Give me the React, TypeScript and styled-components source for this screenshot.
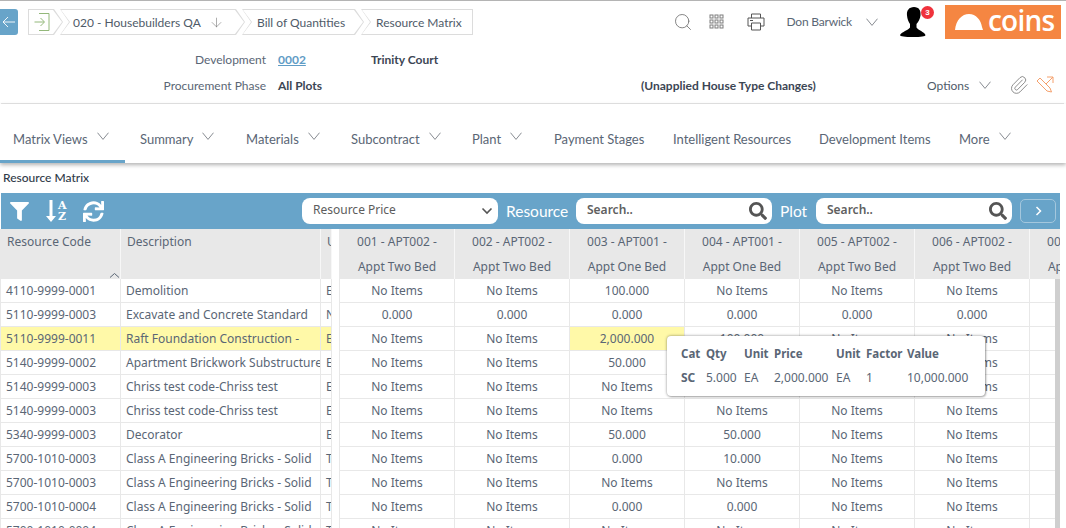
import { ArrowDown, Search, Paperclip } from "lucide-react";
import { FaFilter, FaSearch, FaSync } from "react-icons/fa";
import styled, { createGlobalStyle } from "styled-components";

const GlobalStyle = createGlobalStyle`
  html, body {
    margin: 0;
    padding: 0;
    height: 100%;
    background: #fff;
    overflow: hidden;
  }
  #root {
    height: 100%;
  }
`;

const Page = styled.div`
  width: 1066px;
  height: 528px;
  overflow: hidden;
  border-top: 1px solid #b4b4b4;
  box-sizing: border-box;
  font-family: Lato, "Liberation Sans", sans-serif;
  color: #5a6675;
`;

const TopBar = styled.div`
  display: flex;
  align-items: flex-start;
  height: 45px;
  padding-top: 8px;
  box-sizing: border-box;
`;

const BackButton = styled.div`
  width: 18px;
  height: 26px;
  background: #68a4c9;
  border-radius: 0 3px 3px 0;
  color: #fff;
  display: flex;
  align-items: center;
  justify-content: center;
  margin-right: 10px;
`;

const Crumb = styled.div<{ $width: number; $first?: boolean; $last?: boolean; $pad?: number }>`
  position: relative;
  width: ${(p) => p.$width}px;
  height: 26px;
  margin-left: ${(p) => (p.$first ? 0 : -3)}px;
  padding-left: ${(p) => p.$pad ?? 15}px;
  box-sizing: border-box;
  display: flex;
  align-items: center;
  gap: 8px;
  font-size: 12px;
  color: #4f5b69;
  background: #dcdcdc;
  clip-path: polygon(
    0 0,
    ${(p) => (p.$last ? "100% 0, 100% 100%" : "calc(100% - 9px) 0, 100% 50%, calc(100% - 9px) 100%")},
    0 100%,
    ${(p) => (p.$first ? "0 50%" : "9px 50%")}
  );

  &::before {
    content: "";
    position: absolute;
    inset: 0;
    background: #fff;
    clip-path: polygon(
      1px 1px,
      ${(p) =>
        p.$last
          ? "calc(100% - 1px) 1px, calc(100% - 1px) calc(100% - 1px)"
          : "calc(100% - 10px) 1px, calc(100% - 1px) 50%, calc(100% - 10px) calc(100% - 1px)"},
      1px calc(100% - 1px),
      ${(p) => (p.$first ? "1px 50%" : "10px 50%")}
    );
  }

  > * {
    position: relative;
  }
`;

const CrumbText = styled.span`
  white-space: nowrap;
`;

const TopActions = styled.div`
  margin-left: auto;
  display: flex;
  align-items: flex-start;
`;

const ActionIcon = styled.div<{ $gap: number; $top?: number }>`
  display: flex;
  margin-top: ${(p) => p.$top ?? 4}px;
  margin-right: ${(p) => p.$gap}px;
  color: #7d7d7d;
`;

const UserName = styled.span`
  font-size: 12px;
  letter-spacing: -0.2px;
  line-height: 26px;
  color: #5a6675;
  margin-right: 14px;
  white-space: nowrap;
`;

const Avatar = styled.div`
  position: relative;
  width: 26px;
  height: 30px;
  margin: -2px 19px 0 22px;
`;

const Badge = styled.span`
  position: absolute;
  top: -1px;
  left: 21px;
  width: 13px;
  height: 13px;
  border-radius: 50%;
  background: #f0323c;
  color: #fff;
  font: bold 8px/13px "Liberation Sans", sans-serif;
  text-align: center;
`;

const Logo = styled.div`
  width: 116px;
  height: 34px;
  margin-top: -4px;
  margin-right: 5px;
  background: #f58642;
  display: flex;
  align-items: center;
  padding-left: 9px;
  box-sizing: border-box;
  gap: 4px;
  color: #fff;
`;

const LogoWord = styled.span`
  font: 600 28px/34px "Open Sans", sans-serif;
  letter-spacing: -0.8px;
  margin-top: -4px;
`;

const InfoBlock = styled.div`
  margin: 0 2px 0 1px;
  height: 58px;
  border-bottom: 1px solid #e6e6e6;
  box-sizing: border-box;
`;

const InfoRow = styled.div`
  display: flex;
  align-items: center;
  height: 26px;
  font-size: 12px;
`;

const InfoLabel = styled.span`
  width: 265px;
  text-align: right;
  color: #5a6675;
  flex: none;
`;

const InfoLink = styled.a`
  width: 93px;
  margin-left: 12px;
  color: #5f9cc5;
  font-weight: 700;
  text-decoration: underline;
  flex: none;
`;

const InfoValue = styled.span<{ $width?: number }>`
  width: ${(p) => (p.$width ? `${p.$width}px` : "auto")};
  color: #3c4654;
  font-weight: 700;
  flex: none;
  white-space: nowrap;
`;

const PlotsValue = styled(InfoValue)`
  margin-left: 12px;
`;

const OptionsGroup = styled.div`
  display: flex;
  align-items: center;
  color: #4f5b69;
  margin-left: 111px;
`;

const OptionsText = styled.span`
  margin-right: 10px;
`;

const ClipIcon = styled.span`
  display: flex;
  margin: 0 7px 0 18px;
`;

const TabsBar = styled.div`
  display: flex;
  height: 59px;
  box-sizing: border-box;
  box-shadow: 0 2px 4px rgba(0, 0, 0, 0.3);
  align-items: stretch;
  background: #fff;
`;

const Tab = styled.div<{ $active?: boolean; $width: number }>`
  width: ${(p) => p.$width}px;
  flex: none;
  box-sizing: border-box;
  padding: 26px 0 0 ${(p) => (p.$active ? 13 : 15)}px;
  display: flex;
  gap: 9px;
  align-items: flex-start;
  font-size: 13px;
  line-height: 18px;
  color: #5a6675;
  border-bottom: 3px solid ${(p) => (p.$active ? "#68a4c9" : "transparent")};
  white-space: nowrap;
`;

const TabChevron = styled.span`
  display: flex;
  margin-top: 2px;
`;

const SectionTitle = styled.div`
  margin: 6px 0 0 3px;
  font-size: 12px;
  line-height: 18px;
  font-weight: 500;
  color: #2f3a48;
`;

const Toolbar = styled.div`
  margin: 6px 6px 0 1px;
  height: 36px;
  background: #68a4c9;
  display: flex;
  align-items: center;
  color: #fff;
  box-sizing: border-box;
`;

const ToolIcons = styled.div`
  display: flex;
  align-items: center;
  width: 301px;
  padding-left: 9px;
  box-sizing: border-box;
`;

const SortIcon = styled.div`
  display: flex;
  align-items: center;
  gap: 2px;
  margin: 0 16px 0 17px;
`;

const SortLetters = styled.div`
  display: flex;
  flex-direction: column;
  font: bold 11px/11px "DejaVu Serif", serif;
`;

const Field = styled.div`
  width: 196px;
  height: 26px;
  background: #fff;
  border-radius: 8px;
  display: flex;
  align-items: center;
  justify-content: space-between;
  padding: 0 5px 0 11px;
  box-sizing: border-box;
  font-family: "Noto Sans", sans-serif;
  color: #5c5c5c;
  flex: none;
`;

const SelectText = styled.span`
  font-size: 12px;
  margin-top: -3px;
`;

const SearchText = styled.span`
  font-size: 12px;
  font-weight: 600;
  color: #606060;
  margin-top: -3px;
`;

const ToolLabel = styled.span<{ $width: number }>`
  font-size: 15.5px;
  width: ${(p) => p.$width}px;
  margin: 0 8px;
  white-space: nowrap;
  flex: none;
`;

const NextButton = styled.div`
  width: 36px;
  height: 24px;
  margin-left: 8px;
  border: 1px solid #a4c7dd;
  border-radius: 5px;
  box-sizing: border-box;
  display: flex;
  align-items: center;
  justify-content: center;
`;

const GridArea = styled.div`
  display: flex;
  margin-right: 6px;
`;

const LeftPane = styled.div`
  width: 332px;
  flex: none;
  overflow: hidden;
  border-left: 1px solid #e8e8e8;
  box-sizing: border-box;
`;

const RightPane = styled.div`
  position: relative;
  margin-left: 7px;
  border-left: 1px solid #e8e8e8;
  flex: 1;
  overflow: hidden;
`;

const HeadRow = styled.div`
  display: flex;
  height: 50px;
  background: #e8e8e8;
`;

const HeadCell = styled.div<{ $width: number }>`
  position: relative;
  width: ${(p) => p.$width}px;
  flex: none;
  box-sizing: border-box;
  border-right: 1px solid #f7f7f7;
  padding: 4px 0 0 6px;
  font: 12px/18px "Noto Sans", sans-serif;
  white-space: nowrap;
  overflow: hidden;
`;

const SortCaret = styled.span`
  position: absolute;
  right: 0;
  bottom: 0;
  display: flex;
  color: #5a6675;
`;

const PlotHead = styled.div`
  width: 115px;
  flex: none;
  box-sizing: border-box;
  border-right: 1px solid #f7f7f7;
  font: 12px/25px "Noto Sans", sans-serif;
  text-align: center;
  white-space: nowrap;
`;

const Row = styled.div`
  display: flex;
  height: 24px;
`;

const Cell = styled.div<{ $width: number; $hit?: boolean; $center?: boolean }>`
  width: ${(p) => p.$width}px;
  flex: none;
  box-sizing: border-box;
  padding-left: ${(p) => (p.$center ? 0 : 5)}px;
  border-right: 1px solid #e8e8e8;
  border-bottom: 1px solid #e8e8e8;
  background: ${(p) => (p.$hit ? "#fff9a8" : "#fff")};
  font: 12px/23px "Noto Sans", sans-serif;
  text-align: ${(p) => (p.$center ? "center" : "left")};
  white-space: nowrap;
  overflow: hidden;
`;

const Scrollbar = styled.div`
  position: absolute;
  top: 50px;
  right: 0;
  bottom: 0;
  width: 5px;
  background: #cfcfcf;
`;

const Tooltip = styled.div`
  position: absolute;
  left: 327px;
  top: 107px;
  width: 318px;
  height: 60px;
  padding: 6px 0 0 14px;
  box-sizing: border-box;
  background: #fff;
  border-radius: 4px;
  box-shadow: 0 0 3px rgba(0, 0, 0, 0.45), 1px 1px 2px rgba(0, 0, 0, 0.2);
  display: grid;
  grid-template-columns: 25px 38px 30px 62px 30px 41px 1fr;
  grid-auto-rows: 24px;
  font: 12px/24px "Noto Sans", sans-serif;
`;

const TipHead = styled.span`
  font-weight: 700;
  font-size: 11.5px;
  color: #5a6675;
  white-space: nowrap;
`;

const TipCell = styled.span<{ $bold?: boolean }>`
  font-weight: ${(p) => (p.$bold ? 700 : 400)};
  white-space: nowrap;
`;

const Chevron = ({ size = 12, color = "#7a7f86" }: { size?: number; color?: string }) => (
  <svg width={size} height={size * 0.7} viewBox="0 0 12 8" fill="none" stroke={color} strokeWidth="0.9">
    <path d="M0.5 0.5 L6 7.2 L11.5 0.5" />
  </svg>
);

const ResourceRows = [
  ["4110-9999-0001", "Demolition", "E"],
  ["5110-9999-0003", "Excavate and Concrete Standard", "N"],
  ["5110-9999-0011", "Raft Foundation Construction -", "E"],
  ["5140-9999-0002", "Apartment Brickwork Substructure", "E"],
  ["5140-9999-0003", "Chriss test code-Chriss test", "E"],
  ["5140-9999-0003", "Chriss test code-Chriss test", "E"],
  ["5340-9999-0003", "Decorator", "E"],
  ["5700-1010-0003", "Class A Engineering Bricks - Solid", "T"],
  ["5700-1010-0003", "Class A Engineering Bricks - Solid", "T"],
  ["5700-1010-0004", "Class A Engineering Bricks - Solid", "T"],
  ["5700-1010-0004", "Class A Engineering Bricks - Solid", "T"],
];

const NI = "No Items";
const PlotRows = [
  [NI, NI, "100.000", NI, NI, NI],
  ["0.000", "0.000", "0.000", "0.000", "0.000", "0.000"],
  [NI, NI, "2,000.000", "100.000", NI, NI],
  [NI, NI, "50.000", NI, NI, NI],
  [NI, NI, NI, NI, NI, NI],
  [NI, NI, NI, NI, NI, NI],
  [NI, NI, "50.000", "50.000", NI, NI],
  [NI, NI, "0.000", "10.000", NI, NI],
  [NI, NI, NI, NI, NI, NI],
  [NI, NI, "0.000", "0.000", NI, NI],
  [NI, NI, NI, NI, NI, NI],
];

const Plots = [
  ["001 - APT002 -", "Appt Two Bed"],
  ["002 - APT002 -", "Appt Two Bed"],
  ["003 - APT001 -", "Appt One Bed"],
  ["004 - APT001 -", "Appt One Bed"],
  ["005 - APT002 -", "Appt Two Bed"],
  ["006 - APT002 -", "Appt Two Bed"],
  ["007 - APT002 -", "Appt Two Bed"],
];

const Tabs = [
  { label: "Matrix Views", width: 125, menu: true, active: true },
  { label: "Summary", width: 106, menu: true },
  { label: "Materials", width: 105, menu: true },
  { label: "Subcontract", width: 121, menu: true },
  { label: "Plant", width: 82, menu: true },
  { label: "Payment Stages", width: 119 },
  { label: "Intelligent Resources", width: 146 },
  { label: "Development Items", width: 140 },
  { label: "More", width: 70, menu: true },
];

export default function App() {
  return (
    <>
      <GlobalStyle />
      <Page>
        <TopBar>
          <BackButton>
            <svg width="14" height="12" viewBox="0 0 14 12" fill="none" stroke="#fff" strokeWidth="0.9">
              <path d="M13 6 H1 M6 1 L1 6 L6 11" />
            </svg>
          </BackButton>
          <Crumb $first $width={35} $pad={6}>
            <svg width="16" height="18" viewBox="0 0 16 18" fill="none" stroke="#93b87a" strokeWidth="1">
              <path d="M5 0.5 H15 V17.5 H5 M0.5 9 H10 M6.5 5 L10.5 9 L6.5 13" />
            </svg>
          </Crumb>
          <Crumb $width={185} $pad={13}>
            <CrumbText>020 - Housebuilders QA</CrumbText>
            <ArrowDown size={15} strokeWidth={0.9} color="#6e6e6e" />
          </Crumb>
          <Crumb $width={122}>
            <CrumbText>Bill of Quantities</CrumbText>
          </Crumb>
          <Crumb $last $width={112}>
            <CrumbText>Resource Matrix</CrumbText>
          </Crumb>
          <TopActions>
            <ActionIcon $gap={15} $top={3}>
              <Search size={20} strokeWidth={1} color="#6e6e6e" />
            </ActionIcon>
            <ActionIcon $gap={21}>
              <svg width="18" height="18" viewBox="0 0 18 18" fill="none" stroke="#7d7d7d" strokeWidth="1">
                {[2, 7, 12].flatMap((y) =>
                  [2, 7, 12].map((x) => <rect key={`${x}-${y}`} x={x} y={y} width="3" height="3" />)
                )}
              </svg>
            </ActionIcon>
            <ActionIcon $gap={21}>
              <svg width="18" height="18" viewBox="0 0 18 18" fill="none" stroke="#555" strokeWidth="1">
                <path d="M4.5 5 V1 H13.5 V5 M4.5 13 H1 V5 H17 V13 H13.5" />
                <path d="M4.5 10 H13.5 V17 H4.5 Z" />
                <path d="M3 7.5 H6" />
              </svg>
            </ActionIcon>
            <UserName>Don Barwick</UserName>
            <ActionIcon $gap={0} $top={9}>
              <Chevron />
            </ActionIcon>
            <Avatar>
              <svg width="26" height="30" viewBox="0 0 26 30" fill="#000">
                <path d="M14 0 C9 0 6.5 3.5 7 8.5 C7.3 12 8.5 15 10 17 L10 20.5 C8 23.5 2 24.5 0 28 C0 29.5 5 30 13 30 C21 30 25.5 29.5 25.5 28 C24 24.5 18.5 23.5 16.5 20.5 L16.5 17 C18.5 15 20 12 20.5 8.5 C21 3.5 19 0 14 0 Z" />
              </svg>
              <Badge>3</Badge>
            </Avatar>
            <Logo>
              <svg width="30" height="18" viewBox="0 0 30 18" fill="#fff">
                <path d="M1 17 C2 7 8 1 15 1 C22 1 27 7 28 14 L29 17 Z" />
              </svg>
              <LogoWord>coins</LogoWord>
            </Logo>
          </TopActions>
        </TopBar>
        <InfoBlock>
          <InfoRow>
            <InfoLabel>Development</InfoLabel>
            <InfoLink>0002</InfoLink>
            <InfoValue>Trinity Court</InfoValue>
          </InfoRow>
          <InfoRow>
            <InfoLabel>Procurement Phase</InfoLabel>
            <PlotsValue $width={363}>All Plots</PlotsValue>
            <InfoValue $width={175}>(Unapplied House Type Changes)</InfoValue>
            <OptionsGroup>
              <OptionsText>Options</OptionsText>
              <Chevron />
              <ClipIcon>
                <Paperclip size={20} strokeWidth={1} color="#777" />
              </ClipIcon>
              <svg width="18" height="18" viewBox="0 0 18 18" fill="none" stroke="#f5a06c" strokeWidth="1">
                <path d="M1 5 L4 2 L14 12 L15.5 16 L11 15 Z" />
                <path d="M11 1 H17 V7 M17 1 L10 8" />
              </svg>
            </OptionsGroup>
          </InfoRow>
        </InfoBlock>
        <TabsBar>
          {Tabs.map((t) => (
            <Tab key={t.label} $active={t.active} $width={t.width}>
              {t.label}
              {t.menu && (
                <TabChevron>
                  <Chevron />
                </TabChevron>
              )}
            </Tab>
          ))}
        </TabsBar>
        <SectionTitle>Resource Matrix</SectionTitle>
        <Toolbar>
          <ToolIcons>
            <FaFilter size={19} />
            <SortIcon>
              <svg width="10" height="22" viewBox="0 0 10 22" fill="#fff">
                <path d="M3.5 0 H6.5 V16 H10 L5 22 L0 16 H3.5 Z" />
              </svg>
              <SortLetters>
                <span>A</span>
                <span>Z</span>
              </SortLetters>
            </SortIcon>
            <FaSync size={21} />
          </ToolIcons>
          <Field>
            <SelectText>Resource Price</SelectText>
            <svg width="12" height="8" viewBox="0 0 12 8" fill="none" stroke="#555" strokeWidth="1.6">
              <path d="M1.5 1.5 L6 6 L10.5 1.5" />
            </svg>
          </Field>
          <ToolLabel $width={62}>Resource</ToolLabel>
          <Field>
            <SearchText>Search..</SearchText>
            <FaSearch size={18} color="#555" />
          </Field>
          <ToolLabel $width={28}>Plot</ToolLabel>
          <Field>
            <SearchText>Search..</SearchText>
            <FaSearch size={18} color="#555" />
          </Field>
          <NextButton>
            <svg width="7" height="10" viewBox="0 0 7 10" fill="none" stroke="#fff" strokeWidth="1.5">
              <path d="M1.5 1 L5.5 5 L1.5 9" />
            </svg>
          </NextButton>
        </Toolbar>
        <GridArea>
          <LeftPane>
            <HeadRow>
              <HeadCell $width={120}>
                Resource Code
                <SortCaret>
                  <svg width="11" height="7" viewBox="0 0 11 7" fill="none" stroke="#5a6675" strokeWidth="1">
                    <path d="M1 5.5 L5.5 1.5 L10 5.5" />
                  </svg>
                </SortCaret>
              </HeadCell>
              <HeadCell $width={200}>Description</HeadCell>
              <HeadCell $width={11}>U</HeadCell>
            </HeadRow>
            {ResourceRows.map((r, i) => (
              <Row key={i}>
                <Cell $width={120} $hit={i === 2}>{r[0]}</Cell>
                <Cell $width={200} $hit={i === 2}>{r[1]}</Cell>
                <Cell $width={11} $hit={i === 2}>{r[2]}</Cell>
              </Row>
            ))}
          </LeftPane>
          <RightPane>
            <HeadRow>
              {Plots.map((p, i) => (
                <PlotHead key={i}>
                  {p[0]}
                  <br />
                  {p[1]}
                </PlotHead>
              ))}
            </HeadRow>
            {PlotRows.map((r, i) => (
              <Row key={i}>
                {r.map((v, j) => (
                  <Cell key={j} $width={115} $center $hit={i === 2 && j === 2}>
                    {v}
                  </Cell>
                ))}
                <Cell $width={115} $center />
              </Row>
            ))}
            <Scrollbar />
            <Tooltip>
              {["Cat", "Qty", "Unit", "Price", "Unit", "Factor", "Value"].map((h, i) => (
                <TipHead key={i}>{h}</TipHead>
              ))}
              <TipCell $bold>SC</TipCell>
              <TipCell>5.000</TipCell>
              <TipCell>EA</TipCell>
              <TipCell>2,000.000</TipCell>
              <TipCell>EA</TipCell>
              <TipCell>1</TipCell>
              <TipCell>10,000.000</TipCell>
            </Tooltip>
          </RightPane>
        </GridArea>
      </Page>
    </>
  );
}
